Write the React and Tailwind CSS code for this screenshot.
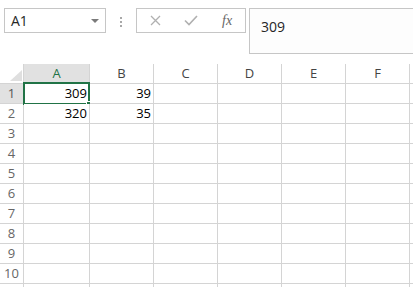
import React from "react"

const cols = ["A", "B", "C", "D", "E", "F", "G"]
const colW = ["w-[66px]", "w-[64px]", "w-[64px]", "w-[64px]", "w-[64px]", "w-[64px]", "w-[64px]"]
const data = {
  1: { A: "309", B: "39" },
  2: { A: "320", B: "35" },
}
const rows = [1, 2, 3, 4, 5, 6, 7, 8, 9, 10, 11]

const FormulaToolbar = () => (
  <div className="flex items-start h-[64px] pt-[8px] pl-[4px] bg-white">
    {/* name box */}
    <div className="flex items-center justify-between w-[102px] h-[25px] border border-[#c6c6c6] bg-white pl-[6px] pr-[6px]">
      <span className="text-[14px] text-[#262626]">A1</span>
      <span className="w-0 h-0 border-l-[4px] border-r-[4px] border-t-[4px] border-l-transparent border-r-transparent border-t-[#7a7a7a]" />
    </div>

    {/* grip dots */}
    <div className="flex flex-col gap-[2px] w-[2px] ml-[14px] mt-[9px]">
      <span className="w-[2px] h-[2px] bg-[#a8a8a8]" />
      <span className="w-[2px] h-[2px] bg-[#a8a8a8]" />
      <span className="w-[2px] h-[2px] bg-[#a8a8a8]" />
    </div>

    {/* cancel / enter / fx */}
    <div className="flex items-center w-[110px] h-[25px] ml-[14px] border border-[#c6c6c6] bg-white">
      <svg className="ml-[13px]" width="11" height="11" viewBox="0 0 11 11">
        <path d="M1 1 L10 10 M10 1 L1 10" stroke="#b0b0b0" strokeWidth="1.3" fill="none" />
      </svg>
      <svg className="ml-[23px]" width="14" height="11" viewBox="0 0 14 11">
        <path d="M1 5.5 L5 9.5 L13 1" stroke="#b0b0b0" strokeWidth="1.6" fill="none" />
      </svg>
      <span className="ml-[24px] italic text-[14px] text-[#666] leading-none" style={{ fontFamily: '"Liberation Serif", serif' }}>
        fx
      </span>
    </div>

    {/* formula bar */}
    <div className="flex-1 h-[46px] ml-[3px] border border-[#c6c6c6] border-r-0 bg-[#fdfdfd] pl-[11px] pt-[5px]">
      <span className="text-[14px] text-[#262626]">309</span>
    </div>
  </div>
)

const HeaderRow = () => (
  <div className="flex h-[20px]">
    <div className="relative w-[24px] shrink-0 border-r border-b border-[#d4d4d4] bg-white">
      <svg className="absolute right-[1px] bottom-[2px]" width="12" height="11" viewBox="0 0 12 11">
        <path d="M12 0 L12 11 L0 11 Z" fill="#dfdfdf" />
      </svg>
    </div>
    {cols.map((c, i) => (
      <div
        key={c}
        className={`${colW[i]} shrink-0 flex items-center justify-center border-r border-b text-[13px] ${
          c === "A"
            ? "bg-[#e1e1e1] text-[#217346] border-r-[#d4d4d4] border-b-[#217346]"
            : "bg-white text-[#444] border-[#d4d4d4]"
        }`}
      >
        {c !== "G" && c}
      </div>
    ))}
  </div>
)

const Row = ({ n }) => (
  <div className="flex h-[20px]">
    <div
      className={`w-[24px] shrink-0 flex items-center justify-center border-r border-b border-[#d4d4d4] text-[13px] ${
        n === 1 ? "bg-[#e1e1e1] text-[#555]" : "bg-white text-[#666]"
      }`}
    >
      {n <= 10 && n}
    </div>
    {cols.map((c, i) => (
      <div
        key={c}
        className={`${colW[i]} shrink-0 relative flex items-center justify-end pr-[2px] border-r border-b border-[#d4d4d4] text-[13px] text-black bg-white`}
      >
        {data[n] && data[n][c]}
        {n === 1 && c === "A" && (
          <>
            <div className="absolute -left-[1px] -top-[2px] w-[67px] h-[23px] border-2 border-[#217346]" />
            <div className="absolute left-[62px] top-[17px] w-[6px] h-[6px] bg-[#217346] border border-white" />
          </>
        )}
      </div>
    ))}
  </div>
)

export default function App() {
  return (
    <div
      className="w-[413px] h-[287px] overflow-hidden bg-white"
      style={{ fontFamily: '"Open Sans", "Liberation Sans", sans-serif' }}
    >
      <FormulaToolbar />
      <div className="overflow-hidden">
        <HeaderRow />
        {rows.map((n) => (
          <Row key={n} n={n} />
        ))}
      </div>
    </div>
  )
}
